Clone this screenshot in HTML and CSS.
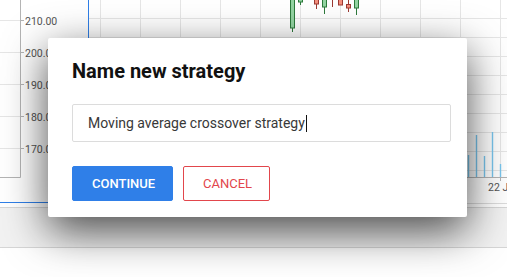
FILE: index.html
```html
<!DOCTYPE html>
<html>
<head>
<meta charset="utf-8">
<link rel="stylesheet" href="styles.css">
</head>
<body>
<div class="screen">
  <svg class="chart" width="507" height="277" viewBox="0 0 507 277" xmlns="http://www.w3.org/2000/svg">
    <rect x="0" y="207" width="507" height="40" fill="#f2f2f2"/>
    <g stroke="#e6e6e6" stroke-width="1">
      <line x1="0" y1="20.5" x2="20" y2="20.5"/>
      <line x1="0" y1="52.5" x2="20" y2="52.5"/>
      <line x1="0" y1="84.5" x2="20" y2="84.5"/>
      <line x1="0" y1="116.5" x2="20" y2="116.5"/>
      <line x1="0" y1="148.5" x2="20" y2="148.5"/>
      <line x1="88" y1="18.5" x2="507" y2="18.5"/>
      <line x1="88" y1="37.5" x2="507" y2="37.5"/>
      <line x1="88" y1="56.5" x2="507" y2="56.5"/>
      <line x1="88" y1="75.5" x2="507" y2="75.5"/>
      <line x1="88" y1="94.5" x2="507" y2="94.5"/>
      <line x1="88" y1="113.5" x2="507" y2="113.5"/>
      <line x1="88" y1="132.5" x2="507" y2="132.5"/>
      <line x1="88" y1="151.5" x2="507" y2="151.5"/>
      <line x1="88" y1="170.5" x2="507" y2="170.5"/>
      <line x1="100.5" y1="0" x2="100.5" y2="177"/>
      <line x1="140.5" y1="0" x2="140.5" y2="177"/>
      <line x1="180.5" y1="0" x2="180.5" y2="177"/>
      <line x1="220.5" y1="0" x2="220.5" y2="177"/>
      <line x1="260.5" y1="0" x2="260.5" y2="177"/>
      <line x1="300.5" y1="0" x2="300.5" y2="177"/>
      <line x1="340.5" y1="0" x2="340.5" y2="177"/>
      <line x1="380.5" y1="0" x2="380.5" y2="177"/>
      <line x1="420.5" y1="0" x2="420.5" y2="177"/>
      <line x1="460.5" y1="0" x2="460.5" y2="177"/>
      <line x1="500.5" y1="0" x2="500.5" y2="177"/>
    </g>
    <g stroke="#b4b4b4" stroke-width="1">
      <line x1="20.5" y1="0" x2="20.5" y2="177.5"/>
      <line x1="0" y1="177.5" x2="20.5" y2="177.5"/>
      <line x1="20" y1="20.5" x2="24" y2="20.5"/>
      <line x1="20" y1="52.5" x2="24" y2="52.5"/>
      <line x1="20" y1="84.5" x2="24" y2="84.5"/>
      <line x1="20" y1="116.5" x2="24" y2="116.5"/>
      <line x1="20" y1="148.5" x2="24" y2="148.5"/>
      <line x1="88" y1="177.5" x2="507" y2="177.5"/>
      <line x1="500.5" y1="177" x2="500.5" y2="181"/>
    </g>
    <g class="ylabels" fill="#555">
      <text x="25" y="24.5">210.00</text>
      <text x="25" y="56.5">200.00</text>
      <text x="25" y="88.5">190.00</text>
      <text x="25" y="120.5">180.00</text>
      <text x="25" y="152.5">170.00</text>
      <text x="488" y="191">22 J</text>
    </g>
    <line x1="88.5" y1="0" x2="88.5" y2="202" stroke="#2f7fe8" stroke-width="1"/>
    <line x1="0" y1="202.5" x2="88.5" y2="202.5" stroke="#2f7fe8" stroke-width="1"/>
    <line x1="88" y1="203.5" x2="507" y2="203.5" stroke="#dcdcdc"/>
    <line x1="0" y1="207.5" x2="507" y2="207.5" stroke="#d6d6d6"/>
    <line x1="0" y1="247.5" x2="507" y2="247.5" stroke="#d6d6d6"/>
    <g stroke="#2d7a3c" fill="#93d4a2" stroke-width="1">
      <line x1="292.5" y1="0" x2="292.5" y2="32"/>
      <rect x="290.5" y="-1" width="4" height="29"/>
      <line x1="300.5" y1="0" x2="300.5" y2="5"/>
      <rect x="298.5" y="-1" width="4" height="3"/>
      <line x1="324.5" y1="0" x2="324.5" y2="14"/>
      <rect x="322.5" y="-1" width="4" height="8"/>
      <line x1="356.5" y1="0" x2="356.5" y2="15"/>
      <rect x="354.5" y="-1" width="4" height="9"/>
    </g>
    <g stroke="#9c3a33" fill="#f4907f" stroke-width="1">
      <line x1="316.5" y1="0" x2="316.5" y2="9"/>
      <rect x="314.5" y="-1" width="4" height="5"/>
      <line x1="332.5" y1="0" x2="332.5" y2="7"/>
      <line x1="340.5" y1="0" x2="340.5" y2="5"/>
      <rect x="338.5" y="-1" width="4" height="6"/>
      <line x1="348.5" y1="0" x2="348.5" y2="12"/>
      <rect x="346.5" y="4.5" width="4" height="3.5"/>
    </g>
    <g stroke="#79c6ee" stroke-width="1.4">
      <line x1="468.5" y1="155" x2="468.5" y2="177"/>
      <line x1="476.5" y1="135" x2="476.5" y2="177"/>
      <line x1="484.5" y1="156" x2="484.5" y2="177"/>
      <line x1="492.5" y1="132" x2="492.5" y2="177"/>
      <line x1="500.5" y1="164" x2="500.5" y2="177"/>
    </g>
  </svg>

  <div class="dialog">
    <h1 class="dialog-title">Name new strategy</h1>
    <div class="field">
      <span class="field-text">Moving average crossover strategy</span><span class="caret"></span>
    </div>
    <div class="actions">
      <button class="btn btn-primary">Continue</button>
      <button class="btn btn-outline">Cancel</button>
    </div>
  </div>
</div>
</body>
</html>
```

FILE: styles.css
```css
html, body {
  margin: 0;
  padding: 0;
  background: #ffffff;
}

body {
  font-family: Roboto, "Liberation Sans", sans-serif;
}

.screen {
  position: relative;
  width: 507px;
  height: 277px;
  overflow: hidden;
  background: #ffffff;
}

.chart {
  display: block;
}

.ylabels {
  font-family: Roboto, "Liberation Sans", sans-serif;
  font-size: 10.5px;
}

.dialog {
  position: absolute;
  left: 48px;
  top: 38px;
  width: 419px;
  height: 179px;
  box-sizing: border-box;
  padding: 21px 16px 16px 24px;
  background: #ffffff;
  border-radius: 2px;
  box-shadow: 0 14px 44px rgba(0, 0, 0, 0.7);
  display: flex;
  flex-direction: column;
}

.dialog-title {
  margin: 0;
  font-size: 20px;
  line-height: 24px;
  font-weight: 700;
  color: #111111;
}

.field {
  margin-top: 21px;
  height: 38px;
  width: 379px;
  box-sizing: border-box;
  border: 1px solid #dcdcdc;
  border-radius: 2px;
  padding: 0 15px;
  display: flex;
  align-items: center;
  font-size: 14px;
  color: #383838;
}

.caret {
  display: inline-block;
  width: 1px;
  height: 17px;
  background: #111111;
  margin-left: 1px;
}

.actions {
  margin-top: 24px;
  display: flex;
  gap: 10px;
}

.btn {
  height: 35px;
  box-sizing: border-box;
  border-radius: 2px;
  font-family: Roboto, "Liberation Sans", sans-serif;
  font-size: 13px;
  text-transform: uppercase;
  padding: 0 19px;
  cursor: pointer;
}

.btn-primary {
  width: 101px;
  background: #2f7fe8;
  border: 1px solid #2f7fe8;
  color: #ffffff;
  font-weight: 500;
}

.btn-outline {
  width: 87px;
  background: #ffffff;
  border: 1px solid #e2464c;
  color: #e2464c;
  font-weight: 400;
}
```
